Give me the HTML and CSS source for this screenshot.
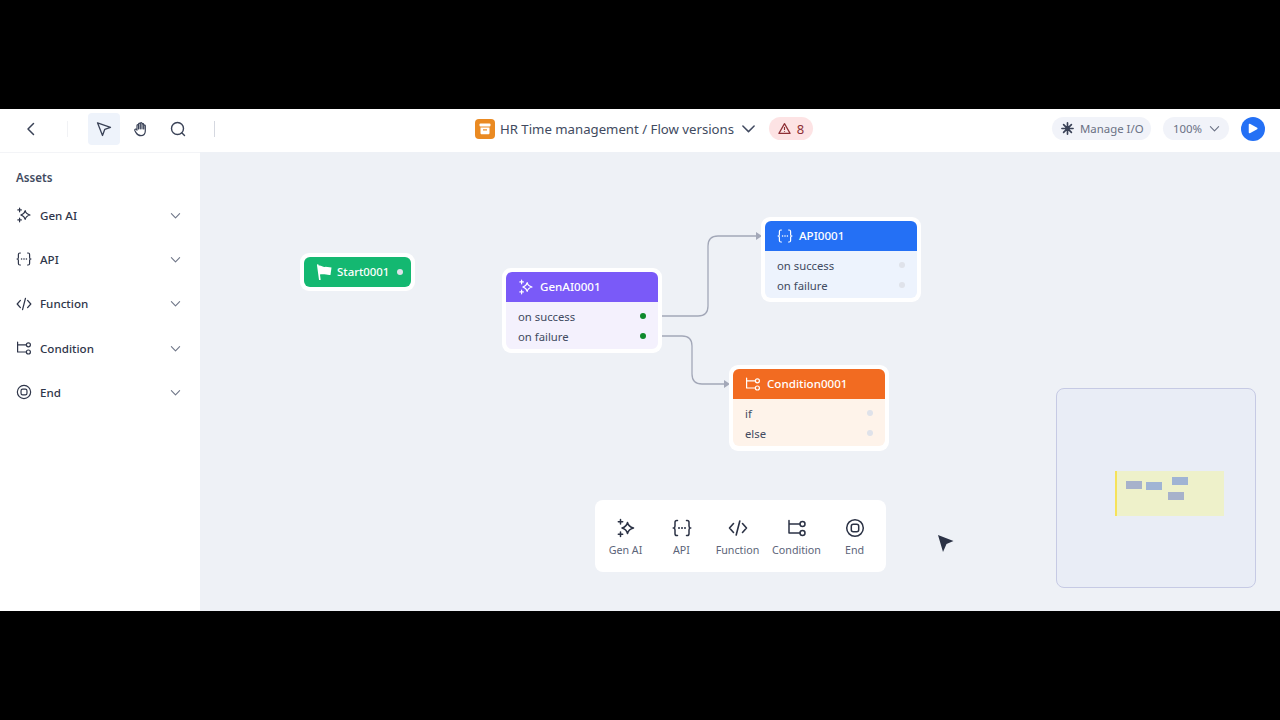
FILE: index.html
```html
<!DOCTYPE html>
<html lang="en">
<head>
    <meta charset="UTF-8">
    <meta name="viewport" content="width=device-width, initial-scale=1.0">
    <title>Flow versions</title>
    <link rel="stylesheet" href="styles.css">
</head>
<body>
    <svg class="defs" width="0" height="0">
        <symbol id="i-genai" viewBox="0 0 20 20">
            <path d="M11.5 4.5 C12.2 7.6 13.6 9 17.5 10 C13.6 11 12.2 12.4 11.5 15.5 C10.8 12.4 9.4 11 6 10 C9.4 9 10.8 7.6 11.5 4.5 Z" fill="none" stroke="currentColor" stroke-width="1.5" stroke-linejoin="round"/>
            <path d="M4.5 1.5 V6 M2.3 3.7 H6.7 M4.5 14 V18.5 M2.3 16.2 H6.7" fill="none" stroke="currentColor" stroke-width="1.5" stroke-linecap="round"/>
        </symbol>
        <symbol id="i-api" viewBox="0 0 20 20">
            <path d="M5.5 2.5 H4.8 C3.6 2.5 3 3.2 3 4.3 V8 C3 9 2.5 9.700 1.800 10 C2.500 10.300 3 11 3 12 V15.700 C3 16.800 3.600 17.500 4.800 17.500 H5.500 M14.500 2.500 H15.200 C16.400 2.500 17 3.200 17 4.300 V8 C17 9 17.500 9.700 18.200 10 C17.500 10.300 17 11 17 12 V15.700 C17 16.800 16.400 17.500 15.200 17.500 H14.500" fill="none" stroke="currentColor" stroke-width="1.500" stroke-linecap="round"/>
            <circle cx="7" cy="10" r="1" fill="currentColor"/><circle cx="10" cy="10" r="1" fill="currentColor"/><circle cx="13" cy="10" r="1" fill="currentColor"/>
        </symbol>
        <symbol id="i-function" viewBox="0 0 20 20">
            <path d="M5.500 5.500 L1.500 10 L5.500 14.500 M14.500 5.500 L18.500 10 L14.500 14.500 M11.800 3 L8.200 17" fill="none" stroke="currentColor" stroke-width="1.600" stroke-linecap="round" stroke-linejoin="round"/>
        </symbol>
        <symbol id="i-condition" viewBox="0 0 20 20">
            <path d="M2 2.500 V15 H13 M2 6 H13" fill="none" stroke="currentColor" stroke-width="1.500" stroke-linecap="round" stroke-linejoin="round"/>
            <circle cx="15.500" cy="6" r="2.500" fill="none" stroke="currentColor" stroke-width="1.500"/>
            <circle cx="15.500" cy="15" r="2.500" fill="none" stroke="currentColor" stroke-width="1.500"/>
        </symbol>
        <symbol id="i-end" viewBox="0 0 20 20">
            <circle cx="10" cy="10" r="8.300" fill="none" stroke="currentColor" stroke-width="1.500"/>
            <rect x="6.300" y="6.300" width="7.400" height="7.400" rx="2" fill="none" stroke="currentColor" stroke-width="1.500"/>
        </symbol>
        <symbol id="i-chevron" viewBox="0 0 12 12">
            <path d="M1.500 4 L6 8.500 L10.500 4" fill="none" stroke="currentColor" stroke-width="1.200" stroke-linecap="round" stroke-linejoin="round"/>
        </symbol>
    </svg>

    <div class="app">
        <header class="topbar">
            <div class="tools">
                <button class="tool back">
                    <svg width="16" height="16" viewBox="0 0 16 16"><path d="M10.500 2.500 L5 8 L10.500 13.500" fill="none" stroke="#3a4257" stroke-width="1.500" stroke-linecap="round" stroke-linejoin="round"/></svg>
                </button>
                <span class="sep faint"></span>
                <button class="tool active">
                    <svg width="16" height="16" viewBox="0 0 16 16"><path d="M1.500 1.800 L14.500 6.300 L8.800 8.300 L6.500 14.500 Z" fill="none" stroke="#3a4257" stroke-width="1.300" stroke-linejoin="round"/></svg>
                </button>
                <button class="tool">
                    <svg width="16" height="16" viewBox="0 0 16 16"><path d="M4 8.500 V4.500 C4 3.300 5.600 3.300 5.600 4.500 V3 C5.600 1.800 7.300 1.800 7.300 3 V2.600 C7.300 1.400 9 1.400 9 2.600 V3.400 C9 2.300 10.700 2.300 10.700 3.400 V4.800 C10.700 3.800 12.300 3.800 12.300 4.800 V10 C12.300 13 10.500 14.700 8 14.700 C5 14.700 4 13.400 3 11.600 L1.800 9.500 C1.300 8.500 2.700 7.500 3.500 8.500 L4 9.200 M5.600 4.500 V8 M7.300 3 V7.800 M9 3.400 V7.800 M10.700 4.800 V8" fill="none" stroke="#3a4257" stroke-width="1.200" stroke-linecap="round" stroke-linejoin="round"/></svg>
                </button>
                <button class="tool">
                    <svg width="16" height="16" viewBox="0 0 16 16"><circle cx="7.500" cy="7.500" r="6" fill="none" stroke="#3a4257" stroke-width="1.400"/><path d="M12 12 L14.500 14.500" stroke="#3a4257" stroke-width="1.400" stroke-linecap="round"/></svg>
                </button>
                <span class="sep"></span>
            </div>

            <div class="title">
                <svg class="title-logo" width="20" height="20" viewBox="0 0 20 20">
                    <rect width="20" height="20" rx="4" fill="#ea8a22"/>
                    <rect x="4.500" y="4.500" width="11" height="3" rx="1" fill="#fff"/>
                    <path d="M5.500 8.500 H14.500 V14 C14.500 14.800 14 15.300 13.200 15.300 H6.800 C6 15.300 5.500 14.800 5.500 14 Z" fill="#fff"/>
                    <rect x="8" y="10.300" width="4" height="1.200" fill="#ea8a22"/>
                </svg>
                <span class="title-text">HR Time management / Flow versions</span>
                <svg class="title-chevron" width="15" height="15"><use href="#i-chevron"/></svg>
                <span class="warn">
                    <svg width="13" height="13" viewBox="0 0 14 14"><path d="M7 1.800 L13 12.300 H1 Z" fill="none" stroke="#8e2f35" stroke-width="1.300" stroke-linejoin="round"/><path d="M7 5.500 V8.500 M7 9.800 V10.500" stroke="#8e2f35" stroke-width="1.200"/></svg>
                    8
                </span>
            </div>

            <div class="actions">
                <span class="pill manage">
                    <svg width="13" height="13" viewBox="0 0 14 14"><path d="M7 1 V13 M1 7 H13 M2.800 2.800 L11.200 11.200 M11.200 2.800 L2.800 11.200" stroke="#3a4257" stroke-width="1.800" stroke-linecap="round"/><circle cx="7" cy="7" r="2.500" fill="#3a4257"/></svg>
                    Manage I/O
                </span>
                <span class="pill zoom">100%
                    <svg width="11" height="11"><use href="#i-chevron"/></svg>
                </span>
                <span class="run">
                    <svg width="10" height="11" viewBox="0 0 10 11"><path d="M1.500 1.500 L8.800 5.500 L1.500 9.500 Z" fill="#fff" stroke="#fff" stroke-width="1.500" stroke-linejoin="round"/></svg>
                </span>
            </div>
        </header>

        <div class="main">
            <aside class="assets">
                <h2>Assets</h2>
                <ul>
                    <li><svg class="ico" width="16" height="16"><use href="#i-genai"/></svg><span>Gen AI</span><svg class="chev" width="11" height="11"><use href="#i-chevron"/></svg></li>
                    <li><svg class="ico" width="16" height="16"><use href="#i-api"/></svg><span>API</span><svg class="chev" width="11" height="11"><use href="#i-chevron"/></svg></li>
                    <li><svg class="ico" width="16" height="16"><use href="#i-function"/></svg><span>Function</span><svg class="chev" width="11" height="11"><use href="#i-chevron"/></svg></li>
                    <li><svg class="ico" width="16" height="16"><use href="#i-condition"/></svg><span>Condition</span><svg class="chev" width="11" height="11"><use href="#i-chevron"/></svg></li>
                    <li><svg class="ico" width="16" height="16"><use href="#i-end"/></svg><span>End</span><svg class="chev" width="11" height="11"><use href="#i-chevron"/></svg></li>
                </ul>
            </aside>

            <section class="canvas">
                <svg class="edges" width="1080" height="459">
                    <path d="M462 164 H498 Q508 164 508 154 V94 Q508 84 518 84 H556" fill="none" stroke="#a3a8b8" stroke-width="1.300"/>
                    <path d="M556 80 L562 84 L556 88 Z" fill="#a3a8b8"/>
                    <path d="M462 184 H482 Q492 184 492 194 V222 Q492 232 502 232 H524" fill="none" stroke="#a3a8b8" stroke-width="1.300"/>
                    <path d="M524 228 L530 232 L524 236 Z" fill="#a3a8b8"/>
                </svg>

                <div class="start-node">
                    <div class="start-inner">
                        <svg width="16" height="16" viewBox="0 0 16 16"><path d="M1.800 1 L3.800 15.500" stroke="#fff" stroke-width="1.700" stroke-linecap="round"/><path d="M2 2 C5 0.500 7 4 9.500 2.800 L15.500 3.500 L14.500 11 C11 11.500 8 9.500 3.200 10.800 Z" fill="#fff"/></svg>
                        <span>Start0001</span>
                        <i class="dot"></i>
                    </div>
                </div>

                <div class="node node-genai">
                    <div class="node-head"><svg width="16" height="16"><use href="#i-genai"/></svg>GenAI0001</div>
                    <div class="node-body">
                        <div class="port">on success<i class="dot on"></i></div>
                        <div class="port">on failure<i class="dot on"></i></div>
                    </div>
                </div>

                <div class="node node-api">
                    <div class="node-head"><svg width="16" height="16"><use href="#i-api"/></svg>API0001</div>
                    <div class="node-body">
                        <div class="port">on success<i class="dot"></i></div>
                        <div class="port">on failure<i class="dot"></i></div>
                    </div>
                </div>

                <div class="node node-cond">
                    <div class="node-head"><svg width="16" height="16"><use href="#i-condition"/></svg>Condition0001</div>
                    <div class="node-body">
                        <div class="port">if<i class="dot"></i></div>
                        <div class="port">else<i class="dot"></i></div>
                    </div>
                </div>

                <div class="palette">
                    <div class="pal-item w-genai"><svg width="20" height="20"><use href="#i-genai"/></svg>Gen AI</div>
                    <div class="pal-item w-api"><svg width="20" height="20"><use href="#i-api"/></svg>API</div>
                    <div class="pal-item w-func"><svg width="20" height="20"><use href="#i-function"/></svg>Function</div>
                    <div class="pal-item w-cond"><svg width="20" height="20"><use href="#i-condition"/></svg>Condition</div>
                    <div class="pal-item w-end"><svg width="20" height="20"><use href="#i-end"/></svg>End</div>
                </div>

                <svg class="cursor" width="18" height="19" viewBox="0 0 18 19"><path d="M1 1 L16.500 7 L9.500 10 L6 18 Z" fill="#2b3245"/></svg>

                <div class="minimap">
                    <div class="view">
                        <i class="mini m1"></i><i class="mini m2"></i><i class="mini m3"></i><i class="mini m4"></i>
                    </div>
                </div>
            </section>
        </div>
    </div>
</body>
</html>
```

FILE: styles.css
```css
* {
    box-sizing: border-box;
}

body {
    margin: 0;
    height: 720px;
    overflow: hidden;
    background: #000;
    font-family: "Noto Sans", "Liberation Sans", sans-serif;
    color: #2b3245;
}

.defs {
    position: absolute;
}

.app {
    margin-top: 109px;
    height: 502px;
    display: flex;
    flex-direction: column;
    background: #fff;
}

/* top bar */
.topbar {
    height: 43px;
    flex: none;
    display: grid;
    grid-template-columns: 1fr auto 1fr;
    align-items: center;
    padding-bottom: 4px;
    background: #fff;
}

.tools {
    display: flex;
    align-items: center;
    padding-left: 15px;
}

.tool {
    width: 32px;
    height: 32px;
    border: 0;
    padding: 0;
    background: none;
    border-radius: 4px;
    display: flex;
    align-items: center;
    justify-content: center;
    margin-right: 5px;
}

.tool.back {
    margin-right: 20px;
}

.tool.active {
    background: #eef3fb;
}

.sep {
    width: 1px;
    height: 16px;
    background: #d5d8e0;
    margin-left: 15px;
}

.sep.faint {
    background: #f1f2f5;
    margin: 0 20px 0 0;
}

.title {
    display: flex;
    align-items: center;
    margin-left: 8px;
}

.title-logo {
    margin-right: 5px;
}

.title-text {
    font-size: 13.2px;
    color: #414a60;
}

.title-chevron {
    margin: 0 13px 0 7px;
    color: #414a60;
}

.warn {
    height: 23px;
    width: 44px;
    border-radius: 12px;
    background: #fde3e4;
    color: #8e2f35;
    font-size: 13px;
    display: flex;
    align-items: center;
    justify-content: center;
    gap: 6px;
}

.actions {
    display: flex;
    align-items: center;
    justify-content: flex-end;
    padding-right: 15px;
    gap: 12px;
}

.pill {
    height: 23px;
    border-radius: 12px;
    background: #f1f3f9;
    color: #6a7184;
    font-size: 11.4px;
    display: flex;
    align-items: center;
}

.manage {
    width: 99px;
    padding-left: 9px;
    gap: 6px;
}

.zoom {
    width: 66px;
    padding-left: 10px;
    gap: 7px;
}

.run {
    width: 24px;
    height: 24px;
    border-radius: 50%;
    background: #2470f5;
    display: flex;
    align-items: center;
    justify-content: center;
}

/* left panel */
.main {
    flex: 1;
    display: flex;
    min-height: 0;
}

.assets {
    width: 200px;
    flex: none;
    padding: 17px 16px 0;
    border-top: 1px solid #f3f4f7;
    background: #fff;
}

.assets h2 {
    margin: 0 0 7px;
    font-size: 11.6px;
    line-height: 16px;
    font-weight: 600;
    color: #414a60;
}

.assets ul {
    margin: 0;
    padding: 0;
    list-style: none;
}

.assets li {
    height: 44.3px;
    display: flex;
    align-items: center;
    font-size: 11.6px;
    font-weight: 500;
    color: #2f364a;
}

.assets li .ico {
    margin-right: 8px;
}

.assets li span {
    flex: 1;
}

.assets li .chev {
    color: #6f7688;
    margin-right: 3px;
}

/* canvas */
.canvas {
    flex: 1;
    position: relative;
    background: #eef1f6;
    overflow: hidden;
}

.edges {
    position: absolute;
    left: 0;
    top: 0;
}

.start-node {
    position: absolute;
    left: 100px;
    top: 101px;
    width: 115px;
    height: 38px;
    padding: 4px;
    background: #fff;
    border-radius: 9px;
}

.start-inner {
    height: 30px;
    border-radius: 6px;
    background: #14b871;
    color: #fff;
    font-size: 11.4px;
    font-weight: 500;
    display: flex;
    align-items: center;
    padding: 0 8px 1px 12px;
    gap: 5px;
}

.start-inner span {
    flex: 1;
}

.dot {
    width: 6px;
    height: 6px;
    border-radius: 50%;
    background: #dfe2ea;
    flex: none;
}

.dot.on {
    background: #0f8a2c;
}

.node {
    position: absolute;
    width: 160px;
    height: 85px;
    padding: 4px;
    background: #fff;
    border-radius: 9px;
}

.node-genai {
    left: 302px;
    top: 116px;
}

.node-api {
    left: 561px;
    top: 65px;
}

.node-cond {
    left: 529px;
    top: 213px;
    height: 86px;
}

.node-head {
    height: 30px;
    border-radius: 6px 6px 0 0;
    color: #fff;
    font-size: 11.6px;
    font-weight: 500;
    display: flex;
    align-items: center;
    gap: 6px;
    padding: 0 0 1px 12px;
}

.node-genai .node-head {
    background: #7a5af8;
}

.node-api .node-head {
    background: #2470f5;
}

.node-cond .node-head {
    background: #f26b21;
}

.node-body {
    height: 47px;
    border-radius: 0 0 6px 6px;
    padding: 4px 12px 0;
    font-size: 11.3px;
    color: #414a60;
}

.node-genai .node-body {
    background: #f4f1fd;
}

.node-api .node-body {
    background: #edf3fd;
}

.node-cond .node-body {
    background: #fef3ea;
}

.port {
    height: 20px;
    display: flex;
    align-items: center;
    justify-content: space-between;
}

/* bottom palette */
.palette {
    position: absolute;
    left: 395px;
    top: 348px;
    width: 291px;
    height: 72px;
    background: #fff;
    border-radius: 8px;
    display: flex;
    padding-left: 8px;
}

.pal-item {
    display: flex;
    flex-direction: column;
    align-items: center;
    padding-top: 18px;
    gap: 5px;
    font-size: 10.7px;
    line-height: 15px;
    color: #5c6478;
}

.pal-item svg {
    color: #2b3245;
}

.w-genai { width: 45px; }
.w-api { width: 67px; }
.w-func { width: 45px; }
.w-cond { width: 73px; }
.w-end { width: 43px; }

.cursor {
    position: absolute;
    left: 737px;
    top: 382px;
}

/* minimap */
.minimap {
    position: absolute;
    left: 856px;
    top: 236px;
    width: 200px;
    height: 200px;
    border: 1px solid #c6cae4;
    border-radius: 8px;
    background: #e9edf6;
    display: flex;
    align-items: center;
}

.view {
    position: relative;
    width: 109px;
    height: 45px;
    margin: 11px 0 0 58px;
    background: #eef1ca;
    border-left: 2px solid #f6e25a;
}

.mini {
    position: absolute;
    width: 16px;
    height: 8px;
    background: #a7b2cb;
}

.m1 { left: 9px; top: 10px; }
.m2 { left: 29px; top: 11px; background: #a0b4d4; }
.m3 { left: 55px; top: 6px; background: #a0b4d4; }
.m4 { left: 51px; top: 21px; }
```
